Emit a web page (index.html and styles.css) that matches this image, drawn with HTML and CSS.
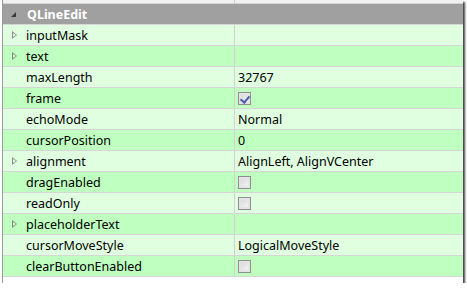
FILE: index.html
```html
<!DOCTYPE html>
<html lang="en">
<head>
    <meta charset="UTF-8">
    <title>QLineEdit properties</title>
    <link rel="stylesheet" href="styles.css">
</head>
<body>
    <div class="panel">
        <div class="row prev">
            <div class="name"></div>
            <div class="value"></div>
        </div>
        <div class="group">
            <span class="open"></span>
            <span class="title">QLineEdit</span>
        </div>

        <div class="row light">
            <div class="name"><span class="arrow"></span>inputMask</div>
            <div class="value"></div>
        </div>
        <div class="row dark">
            <div class="name"><span class="arrow"></span>text</div>
            <div class="value"></div>
        </div>
        <div class="row light">
            <div class="name">maxLength</div>
            <div class="value">32767</div>
        </div>
        <div class="row dark">
            <div class="name">frame</div>
            <div class="value"><span class="check on"></span></div>
        </div>
        <div class="row light">
            <div class="name">echoMode</div>
            <div class="value">Normal</div>
        </div>
        <div class="row dark">
            <div class="name">cursorPosition</div>
            <div class="value">0</div>
        </div>
        <div class="row light">
            <div class="name"><span class="arrow"></span>alignment</div>
            <div class="value">AlignLeft, AlignVCenter</div>
        </div>
        <div class="row dark">
            <div class="name">dragEnabled</div>
            <div class="value"><span class="check"></span></div>
        </div>
        <div class="row light">
            <div class="name">readOnly</div>
            <div class="value"><span class="check"></span></div>
        </div>
        <div class="row dark">
            <div class="name"><span class="arrow"></span>placeholderText</div>
            <div class="value"></div>
        </div>
        <div class="row light">
            <div class="name">cursorMoveStyle</div>
            <div class="value">LogicalMoveStyle</div>
        </div>
        <div class="row dark">
            <div class="name">clearButtonEnabled</div>
            <div class="value"><span class="check"></span></div>
        </div>
    </div>
</body>
</html>
```

FILE: styles.css
```css
* {
    margin: 0;
    padding: 0;
    box-sizing: border-box;
}

body {
    font-family: "Noto Sans", "Open Sans", sans-serif;
    font-size: 12.5px;
    color: #000;
    background: #fff;
}

.panel {
    width: 461px;
    margin-left: 2px;
    border-left: 1px solid #9a9a9a;
    padding-bottom: 6px;
    background: #fff;
    box-shadow: 2px 2px 2px rgba(0, 0, 0, 0.75);
}

.row {
    display: grid;
    grid-template-columns: 232px 1fr;
    height: 21px;
    border-bottom: 1px solid #d6d6d6;
}

.row.prev {
    height: 4px;
    background: #f0f0f0;
}

.light {
    background: #e0ffe0;
}

.dark {
    background: #bfffbf;
}

.name {
    display: flex;
    align-items: center;
    padding-left: 23px;
    position: relative;
    border-right: 1px solid #d2d2d2;
}

.value {
    display: flex;
    align-items: center;
    padding-left: 3px;
}

.arrow {
    position: absolute;
    left: 9px;
    top: 6px;
    width: 0;
    height: 0;
    border-top: 4px solid transparent;
    border-bottom: 4px solid transparent;
    border-left: 5px solid #8c8c8c;
}

.arrow::after {
    content: "";
    position: absolute;
    left: -4px;
    top: -2px;
    border-top: 2px solid transparent;
    border-bottom: 2px solid transparent;
    border-left: 3px solid #fff;
}

.light .arrow::after {
    border-left-color: #e0ffe0;
}

.dark .arrow::after {
    border-left-color: #bfffbf;
}

.group {
    display: flex;
    align-items: center;
    height: 21px;
    background: #a0a0a0;
    border-bottom: 1px solid #d6d6d6;
    padding-left: 8px;
}

.open {
    width: 0;
    height: 0;
    border-left: 5px solid transparent;
    border-bottom: 5px solid #3a3a3a;
    margin-right: 11px;
    margin-top: 1px;
}

.title {
    color: #fff;
    font-weight: bold;
}

.check {
    width: 13px;
    height: 13px;
    border: 1px solid #8e8f8f;
    background: linear-gradient(135deg, #d4d4d4, #f8f8f8);
    box-shadow: inset 0 0 0 2px #e4e4e4;
    position: relative;
}

.check.on::after {
    content: "";
    position: absolute;
    left: 3px;
    top: 1px;
    width: 4px;
    height: 7px;
    border-right: 2px solid #4a5fb0;
    border-bottom: 2px solid #4a5fb0;
    transform: rotate(40deg);
}
```
